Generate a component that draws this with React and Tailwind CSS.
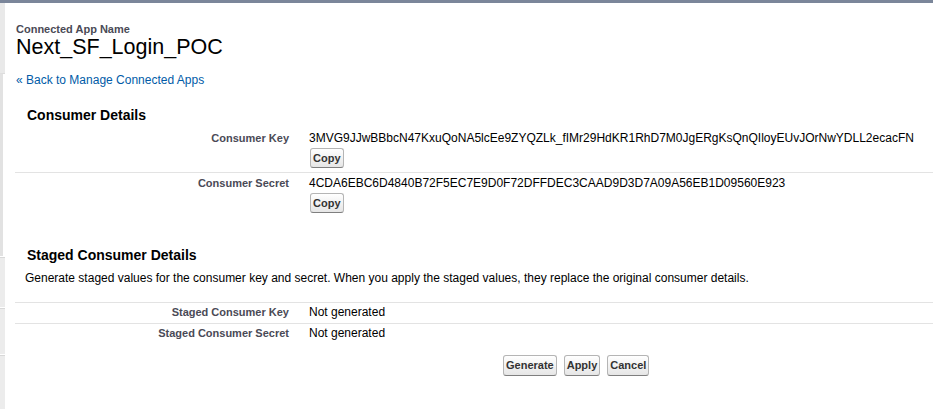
import React from "react";

const Btn = ({ children, h = "h-[20px]" }) => (
  <button className={`${h} px-[2px] rounded-[3px] border border-[#b5b5b5] border-b-[#7f7f7f] bg-gradient-to-b from-white to-[#e6e6e6] text-[11px] font-bold text-[#333] leading-none font-['Liberation_Sans',Arial,sans-serif]`}>
    {children}
  </button>
);

const Row = ({ label, children, border = true, className = "" }) => (
  <div className={`flex ${border ? "border-b border-[#e3e3e3]" : ""} ${className}`}>
    <div className="w-[284px] shrink-0 pr-[10px] text-right text-[11px] font-bold text-[#4a4a56] leading-[15px]">
      {label}
    </div>
    <div className="pl-[10px] text-[12px] text-black">{children}</div>
  </div>
);

export default function App() {
  return (
    <div className="w-[933px] h-[409px] bg-white overflow-hidden font-['Liberation_Sans',Arial,sans-serif] text-black">
      <div className="h-[3px] bg-[#7b869a]" />
      <div className="flex h-[406px]">
        <div className="w-[5px] shrink-0 flex flex-col">
          <div className="h-[70px] bg-[#e9e9e9]" />
          <div className="h-[183px] border-l-[3px] border-[#e2e2e2] bg-white border-t border-t-[#dcdcdc]" />
          <div className="h-[50px] bg-[#ececec] border-t border-[#d8d8d8] mt-[1px]" />
          <div className="h-[46px] bg-[#ececec] border-t border-[#d8d8d8] mt-[1px]" />
          <div className="flex-1 bg-[#ececec] border-t border-[#d8d8d8] mt-[1px]" />
        </div>
        <div className="flex-1 pl-[10px]">
          <div className="pt-[19px] pl-[1px]">
            <div className="text-[11px] font-bold text-[#4a4a56] leading-[14px]">Connected App Name</div>
            <div className="text-[21.5px] leading-[23px] text-black">Next_SF_Login_POC</div>
          </div>
          <div className="mt-[14px] pl-[1px] text-[12px] text-[#015ba7] leading-[14px]">« Back to Manage Connected Apps</div>

          <div className="mt-[20px] pl-[12px] text-[14px] font-bold leading-[17px]">Consumer Details</div>
          <div className="mt-[5px]">
            <Row label="Consumer Key" className="pb-[4px] pt-[2px]">
              <div className="leading-[15px]">3MVG9JJwBBbcN47KxuQoNA5lcEe9ZYQZLk_fIMr29HdKR1RhD7M0JgERgKsQnQIloyEUvJOrNwYDLL2ecacFN</div>
              <div className="mt-[2px] pl-[1px]"><Btn>Copy</Btn></div>
            </Row>
            <Row label="Consumer Secret" border={false} className="pt-[3px]">
              <div className="leading-[15px]">4CDA6EBC6D4840B72F5EC7E9D0F72DFFDEC3CAAD9D3D7A09A56EB1D09560E923</div>
              <div className="mt-[2px] pl-[1px]"><Btn>Copy</Btn></div>
            </Row>
          </div>

          <div className="mt-[34px] pl-[12px] text-[14px] font-bold leading-[17px]">Staged Consumer Details</div>
          <div className="mt-[7px] pl-[10px] text-[12px] leading-[14px]">
            Generate staged values for the consumer key and secret. When you apply the staged values, they replace the original consumer details.
          </div>
          <div className="mt-[17px] border-t border-[#e3e3e3]">
            <Row label="Staged Consumer Key" className="h-[21px] pt-[2px]">
              <div className="leading-[15px]">Not generated</div>
            </Row>
            <Row label="Staged Consumer Secret" border={false} className="h-[21px] pt-[2px]">
              <div className="leading-[15px]">Not generated</div>
            </Row>
          </div>
          <div className="mt-[10px] pl-[488px] flex gap-[7px]">
            <Btn h="h-[21px]">Generate</Btn>
            <Btn h="h-[21px]">Apply</Btn>
            <Btn h="h-[21px]">Cancel</Btn>
          </div>
        </div>
      </div>
    </div>
  );
}
